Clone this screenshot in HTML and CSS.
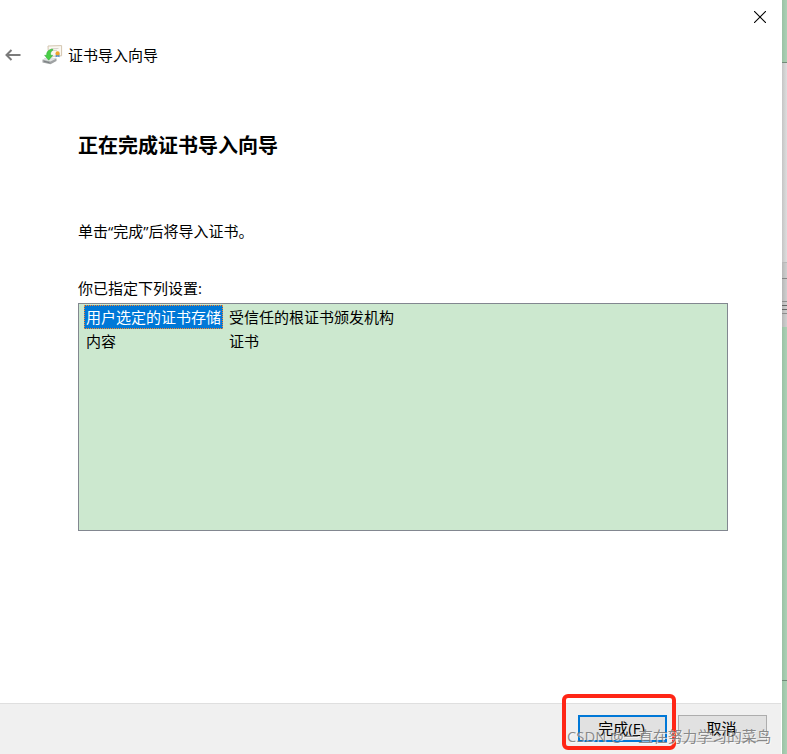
FILE: index.html
```html
<!DOCTYPE html>
<html lang="zh-CN">
<head>
<meta charset="utf-8">
<title>证书导入向导</title>
<link rel="stylesheet" href="styles.css">
</head>
<body>
<div class="desktop">
  <main class="wizard">
    <div class="titlebar">
      <svg class="close" width="12" height="12" viewBox="0 0 12 12"><path d="M0 0L12 12M12 0L0 12"/></svg>
    </div>
    <header class="header">
      <svg class="back" width="16" height="12" viewBox="0 0 16 12"><path d="M15.5 6H1.5M6.5 1L1.5 6L6.5 11"/></svg>
      <svg class="cert" width="21" height="20" viewBox="0 0 21 20">
        <path d="M6 1L19.6 .6V10.8L6.5 11.5Z" fill="#fbf8f2" stroke="#d3c5b0"/>
        <path d="M9 3.8L16.5 3.4M10 5.6L15 5.3" stroke="#d0cac0" stroke-width=".8"/>
        <path d="M13.8 9L13.6 12.3L15.6 11.4L17.6 12.3L17.4 9Z" fill="#4d8bd0"/>
        <circle cx="15.6" cy="8.4" r="2.1" fill="#efa42c"/>
        <path d="M.5 14.8L5.5 12L14.5 13.6V16L8.5 19.3L.5 17.4Z" fill="#9fa2a3"/>
        <path d="M.5 14.8L5.5 12L14.5 13.6L8.5 16.6Z" fill="#e0e2e2"/>
        <path d="M2 16.2L7.5 17.8" stroke="#6f7577" stroke-width=".8"/>
        <path d="M10.5 4C6.2 4.6 4.4 7 4.7 10.3H2.6L6.7 15.2L10.7 10.3H8.6C8.3 7.8 9 6 11 5Z" fill="#48cf45" stroke="#30a638" stroke-width=".5"/>
      </svg>
      <span class="name">证书导入向导</span>
    </header>
    <section class="content">
      <h1>正在完成证书导入向导</h1>
      <p class="hint">单击“完成”后将导入证书。</p>
      <p class="label">你已指定下列设置:</p>
      <div class="settings">
        <span class="key selected">用户选定的证书存储</span><span class="value">受信任的根证书颁发机构</span>
        <span class="key">内容</span><span class="value">证书</span>
      </div>
    </section>
    <footer class="footer">
      <button class="button primary">完成(<u>F</u>)</button>
      <button class="button">取消</button>
    </footer>
  </main>
  <aside class="backdrop">
    <div class="green-top"></div>
    <div class="panel"></div>
    <div class="toolbar"><i class="rule"></i><i class="mark"></i><i class="mark dark"></i><i class="mark dark"></i><i class="mark"></i></div>
    <div class="green-mid"></div>
    <div class="green-end"></div>
  </aside>
</div>
<div class="highlight"></div>
<div class="watermark">CSDN @<span>一直在努力学习的菜鸟</span></div>
</body>
</html>
```
FILE: styles.css
```css
* { box-sizing: border-box; }
body {
  margin: 0;
  overflow: hidden;
  background: #fff;
  color: #000;
  font: 15px/20px "Open Sans", "Noto Sans CJK SC", sans-serif;
}
.desktop { display: flex; width: 787px; height: 754px; }
.wizard { display: flex; flex-direction: column; width: 782px; background: #fff; }
.titlebar { display: flex; justify-content: flex-end; height: 36px; padding: 11px 16px 0 0; }
.close { fill: none; stroke: #000; stroke-width: 1.1; }
.header { display: flex; align-items: center; height: 38px; padding-left: 5px; }
.back { fill: none; stroke: #7b7b7b; stroke-width: 2; }
.cert { margin-left: 21px; fill: none; }
.name { margin-left: 5px; }
.content { flex: 1; padding: 58px 54px 0 78px; }
h1 { margin: 0; font-size: 20px; line-height: 28px; font-weight: 700; }
p { margin: 0; }
.hint { margin-top: 61px; }
.label { margin-top: 37px; font-size: 15px; }
.settings {
  display: grid;
  grid-template-columns: 139px 1fr;
  grid-auto-rows: 24px;
  column-gap: 4px;
  align-content: start;
  height: 228px;
  margin-top: 5px;
  padding: 1px 5px;
  border: 1px solid #828790;
  background: #cce8cf;
}
.key, .value { padding: 0 2px; line-height: 24px; white-space: nowrap; }
.key.selected { background: #0078d7; color: #fff; line-height: 22px; padding: 0 1px; border: 1px dotted #ff8728; }
.footer {
  display: flex;
  gap: 11px;
  width: 781px;
  height: 51px;
  padding: 11px 0 0 578px;
  border-top: 1px solid #dfdfdf;
  background: #f0f0f0;
}
.button {
  width: 89px;
  height: 27px;
  padding: 0 2px 0 0;
  border: 1px solid #adadad;
  background: #e1e1e1;
  color: #000;
  font: inherit;
  line-height: 23px;
}
.primary { border: 2px solid #0078d7; }
.backdrop { display: flex; flex-direction: column; width: 5px; }
.green-top { height: 63px; border-bottom: 1px solid #718c78; background: linear-gradient(90deg, #9bc2a5, #acd1b5); }
.panel { height: 199px; background: linear-gradient(90deg, #c5c5c5, #dedede); }
.toolbar { display: flex; flex-direction: column; gap: 3px; height: 65px; border-top: 1px solid #b9b9b9; background: linear-gradient(90deg, #b8b8b8, #d0d0d0); }
.rule { height: 1px; margin: 15px 0 19px; background: #858585; }
.mark { height: 1px; background: #8d8d8d; }
.dark { background: #666; }
.green-mid { height: 354px; border-bottom: 1px solid #718c78; background: linear-gradient(90deg, #9bc2a5, #acd1b5); }
.green-end { flex: 1; background: linear-gradient(90deg, #9bc2a5, #acd1b5); }
.highlight { position: absolute; left: 562px; top: 694px; width: 114px; height: 56px; border: 4px solid #ff2616; border-radius: 6px; }
.watermark {
  position: absolute;
  left: 567px;
  top: 726px;
  color: rgba(125, 125, 125, .9);
  font-size: 14.8px;
  line-height: 20px;
  white-space: nowrap;
  text-shadow: 1px 1px 0 rgba(255, 255, 255, .6);
}
```
